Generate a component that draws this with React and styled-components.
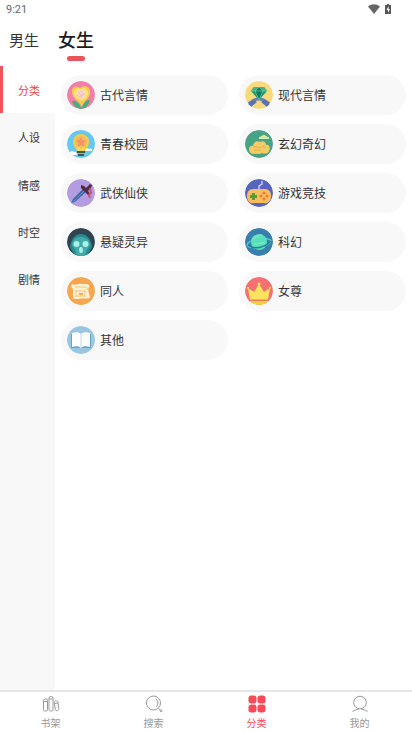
import React, { useState } from "react";
import styled, { createGlobalStyle } from "styled-components";

const GlobalStyle = createGlobalStyle`
  * { box-sizing: border-box; }
  body {
    margin: 0;
    background: #fff;
    color: #333;
    font-family: Roboto, "Noto Sans CJK SC", sans-serif;
  }
`;

const PlainButton = styled.button`
  padding: 0;
  border: 0;
  background: none;
  color: inherit;
  font-family: inherit;
  cursor: pointer;
`;

const Page = styled.div`
  display: flex;
  flex-direction: column;
  min-height: 100vh;
`;

const StatusBar = styled.div`
  display: flex;
  align-items: center;
  justify-content: space-between;
  height: 18px;
  padding: 0 20px 0 6px;
  font-size: 11px;
  color: #666;
`;

const StatusIcons = styled.div`
  display: flex;
  align-items: center;
  gap: 4px;
`;

const Header = styled.header`
  display: flex;
  align-items: center;
  gap: 19px;
  height: 48px;
  padding: 0 9px 2px;
`;

const GenderTab = styled(PlainButton)`
  position: relative;
  color: ${(p) => (p.$active ? "#1c1c1c" : "#333")};
  font-size: ${(p) => (p.$active ? 18 : 15)}px;
  font-weight: ${(p) => (p.$active ? 500 : 400)};
  line-height: 24px;

  &::after {
    content: "";
    display: ${(p) => (p.$active ? "block" : "none")};
    position: absolute;
    left: 50%;
    bottom: -8px;
    width: 18px;
    height: 5px;
    margin-left: -9px;
    border-radius: 3px;
    background: #e95558;
  }
`;

const Body = styled.div`
  display: flex;
  flex: 1;
`;

const Sidebar = styled.aside`
  width: 55px;
  background: #f8f8f8;
`;

const SideList = styled.nav`
  display: flex;
  flex-direction: column;
  height: 237px;
`;

const SideItem = styled(PlainButton)`
  flex: 1;
  border-left: 3px solid ${(p) => (p.$active ? "#f25558" : "transparent")};
  background: ${(p) => (p.$active ? "#fff" : "transparent")};
  color: ${(p) => (p.$active ? "#f04348" : "#333")};
  font-size: 11px;
`;

const Grid = styled.main`
  flex: 1;
  display: grid;
  grid-template-columns: 1fr 1fr;
  grid-auto-rows: 40px;
  gap: 9px 11px;
  padding: 9px 6px;
`;

const Category = styled(PlainButton)`
  display: flex;
  align-items: center;
  gap: 5px;
  padding: 0 6px;
  border-radius: 20px;
  background: #f8f8f8;
  font-size: 12px;
  line-height: 18px;

  svg { flex: none; border-radius: 50%; }
`;

const CategoryName = styled.span`
  padding-top: 2px;
`;

const BottomNav = styled.nav`
  display: flex;
  height: 44px;
  border-top: 2px solid #e6e6e6;
  background: #fff;
`;

const NavItem = styled(PlainButton)`
  flex: 1;
  display: flex;
  flex-direction: column;
  align-items: center;
  gap: 3px;
  padding: 3px 2px 0 0;
  color: ${(p) => (p.$active ? "#f94b55" : "#999")};
  font-size: 10px;
  line-height: 16px;
`;

function Art({ bg, children }) {
  return (
    <svg width="28" height="28" viewBox="0 0 28 28" aria-hidden="true">
      <circle cx="14" cy="14" r="14" fill={bg} />
      {children}
    </svg>
  );
}

const Rose = () => (
  <Art bg="#f07fa9">
    <path d="M14 27C12 22 9 19 5 20c1 4 4 7 9 8 5-1 8-4 9-9-4 0-7 3-9 8Z" fill="#43b17b" />
    <path d="M5 12C4 6 9 4 13 7c4-4 11-1 10 5 0 6-6 7-8 14C12 20 6 18 5 12Z" fill="#f9cb4f" />
    <path d="M7 12c0-4 4-6 7-4 4-2 8 1 7 5s-3 5-6 7c-4-1-8-3-8-8Z" fill="#ffe272" />
    <circle cx="14" cy="13" r="4.500" fill="#fbdcd2" />
    <path d="M11 12c2-3 6-1 5 1s-4 1-3-1M10 14c2 3 6 2 7-1" fill="none" stroke="#f3a4ad" strokeWidth=".8" />
  </Art>
);

const Bulb = () => (
  <Art bg="#65c8ef">
    <path d="M6 12a8 8 0 0 1 16 0c0 5-4 6-4 10h-8c0-4-4-5-4-10Z" fill="#f8cd45" />
    <circle cx="14" cy="12" r="6" fill="#f9b95a" />
    <path d="m14 7 1.500 3 3.500.5-2.500 2.500.5 3.500-3-1.500-3 1.500.5-3.500L9 10.500l3.500-.5Z" fill="#f39468" />
    <path d="M12 17v5M16 17v5" stroke="#f9e889" />
    <path d="M10 21h8v2h-8ZM11 24h6v2h-6Z" fill="#40583b" />
    <path d="M3 23c0-2 3-3 4-1 2-1 3 1 3 3H5ZM18 20c1-2 3-2 4-1 2-1 4 0 3 2h-6Z" fill="#fff" />
  </Art>
);

const Sword = () => (
  <Art bg="#b49ce1">
    <path d="m4 25 2-5L17 9l3 3L9 22Z" fill="#3e68a5" />
    <path d="M5 24 18 11" stroke="#6190c2" />
    <path d="m14 6 3 1 2 2 4-4 2 1-1 3-3 3 2 3-2 1-7-7Z" fill="#512c43" />
    <path d="m23 9 1 5-2 2 1 3" fill="none" stroke="#c65082" strokeWidth="2" />
  </Art>
);

const Skull = () => (
  <Art bg="#304552">
    <path d="M3 19C4 10 9 6 14 6s10 4 11 13l-5 9H8Z" fill="#278c91" />
    <path d="M5 17c0-5 4-8 9-8s9 3 9 8l-3 5-2 6h-8l-2-6Z" fill="#43aaa7" />
    <circle cx="9.500" cy="16" r="3" fill="#a7f1e6" />
    <circle cx="18.500" cy="16" r="3" fill="#a7f1e6" />
    <ellipse cx="14" cy="22" rx="2" ry="3" fill="#a7f1e6" />
  </Art>
);

const Scroll = () => (
  <Art bg="#f4a650">
    <path d="M5 7c3 2 6-1 9 0h6c3 0 3 4 1 5l2 9c-4 1-8 0-12 1-3 0-5 0-5-2V12C4 11 4 9 5 7Z" fill="#fff1cf" />
    <path d="M8 10h10c2 0 3 1 2 3M9 13v7M18 13v7M9 14h9M9 19h9" fill="none" stroke="#f3bd78" strokeWidth=".8" />
    <path d="M12 16h4v2h-4Z" fill="#f3ad5a" />
  </Art>
);

const Book = () => (
  <Art bg="#9ac6df">
    <path d="M4 8h20v14H4Z" fill="#67a4c3" />
    <path d="M5 7c4-1 7-1 9 1v14c-2-2-5-2-9-1Z" fill="#fff" />
    <path d="M14 8c2-2 5-2 9-1v14c-4-1-7-1-9 1Z" fill="#f8fbfb" />
    <path d="M14 8v13" stroke="#c3d7df" />
  </Art>
);

const Ring = () => (
  <Art bg="#fbda7b">
    <path d="M4 25c2-5 6-7 10-7s8 2 10 7" fill="none" stroke="#6381b7" strokeWidth="3" />
    <path d="m3 21 6-2 3 2-6 5ZM25 21l-6-2-3 2 6 5Z" fill="#5675ad" />
    <path d="M9 6h10l3 4-8 9-8-9Z" fill="#159571" />
    <path d="M9 6h4l-3 4H6ZM15 6h4l3 4h-4Z" fill="#45b487" />
    <path d="m10 10 4-4 4 4-4 9Z" fill="#087c60" />
    <path d="M6 10h16M10 10l4 9 4-9-4-4Z" fill="none" stroke="#7bd3a0" strokeWidth=".7" />
  </Art>
);

const Dragon = () => (
  <Art bg="#48a285">
    <path d="M14 7c2 0 3-2 5-2s2 2 5 2v2H14Z" fill="#d8e8a4" />
    <path d="M4 19c0-3 3-4 4-3 0-4 4-6 7-4 3-2 6 0 6 3 3-1 5 3 3 6-1 3-5 3-7 2-3 2-5 0-8 1-3 0-5-2-5-5Z" fill="#f4cc65" />
    <path d="M8 17c3-2 5 2 8 0s4 0 3 2M9 21c3-2 5 0 7-1" fill="none" stroke="#dea955" strokeWidth=".8" />
  </Art>
);

const Gamepad = () => (
  <Art bg="#5965bd">
    <path d="M14 11V7l3-2V2" fill="none" stroke="#c4cef1" strokeWidth="1.500" />
    <path d="M8 10h12c4 0 6 3 6 7 0 5-3 8-7 7H9c-4 1-7-2-7-7 0-4 2-7 6-7Z" fill="#f8bd5e" />
    <path d="M7 14h3v2h2v3h-2v2H7v-2H5v-3h2Z" fill="#579b3c" />
    <g fill="#ec793a">
      <circle cx="19" cy="14" r="1.500" />
      <circle cx="19" cy="20" r="1.500" />
      <circle cx="16" cy="17" r="1.500" />
      <circle cx="22" cy="17" r="1.500" />
    </g>
  </Art>
);

const Planet = () => (
  <Art bg="#397fae">
    <ellipse cx="14" cy="15" rx="12" ry="4" fill="none" stroke="#50c7bf" strokeWidth="1.500" transform="rotate(-10 14 15)" />
    <circle cx="14" cy="14" r="8" fill="#58dfbb" />
    <path d="M7 11c5-1 5-4 10-4M9 16c4 1 6-2 11-1" fill="none" stroke="#91efc8" strokeWidth=".8" />
    <path d="M3 17c6 5 16 3 23-4" fill="none" stroke="#267f95" strokeWidth="1.500" />
  </Art>
);

const Crown = () => (
  <Art bg="#f77071">
    <path d="M4 24h20c-2 3-6 4-10 4s-8-1-10-4Z" fill="#f9d13f" />
    <path d="m3 11 6 4 5-8 5 8 6-4-2 12H5Z" fill="#ffe35f" />
    <g fill="#ffe35f">
      <circle cx="3" cy="11" r="1" />
      <circle cx="14" cy="7" r="1.500" />
      <circle cx="25" cy="11" r="1" />
    </g>
    <path d="M5 23h18" stroke="#d88b42" />
  </Art>
);

const NavIcon = ({ children }) => (
  <svg width="18" height="18" viewBox="0 0 18 18" fill="none" stroke="currentColor" aria-hidden="true">
    {children}
  </svg>
);

const ShelfIcon = () => (
  <NavIcon>
    <rect x="1.500" y="4" width="4" height="12" rx="1.500" />
    <rect x="7" y="1.500" width="4" height="14.500" rx="1.500" />
    <path d="M12.300 8c-.3-2.500 3-3 3.700-1l.8 6.500c.3 2.500-3 3-3.500 1ZM2 6.500h3M7.500 4h3M13 8.500l3-.5" />
  </NavIcon>
);

const SearchIcon = () => (
  <NavIcon>
    <circle cx="8.500" cy="8" r="7" />
    <path d="M11 4c2.500 2 2.500 6 0 8M13.500 13.500 15 15" />
    <circle cx="16" cy="15.700" r="1" />
  </NavIcon>
);

const GridIcon = () => (
  <NavIcon>
    <g fill="currentColor" stroke="none">
      <rect x="0.500" y="0.500" width="8" height="8" rx="2.700" />
      <rect x="9.500" y="0.500" width="8" height="8" rx="2.700" />
      <rect x="0.500" y="9.500" width="8" height="8" rx="2.700" />
      <rect x="9.500" y="9.500" width="8" height="8" rx="2.700" />
    </g>
  </NavIcon>
);

const UserIcon = () => (
  <NavIcon>
    <circle cx="9" cy="7.500" r="6.300" />
    <path d="M1.500 16.500c2-1.500 4-2 6-2M10.500 14.500c2 0 4 .5 6 2" />
  </NavIcon>
);

const sections = ["分类", "人设", "情感", "时空", "剧情"];

const categories = [
  ["古代言情", Rose], ["现代言情", Ring],
  ["青春校园", Bulb], ["玄幻奇幻", Dragon],
  ["武侠仙侠", Sword], ["游戏竞技", Gamepad],
  ["悬疑灵异", Skull], ["科幻", Planet],
  ["同人", Scroll], ["女尊", Crown],
  ["其他", Book],
];

const tabs = [["书架", ShelfIcon], ["搜索", SearchIcon], ["分类", GridIcon], ["我的", UserIcon]];

export default function App() {
  const [gender, setGender] = useState("女生");
  const [section, setSection] = useState("分类");
  const [tab, setTab] = useState("分类");

  return (
    <Page>
      <GlobalStyle />
      <StatusBar>
        <span>9:21</span>
        <StatusIcons>
          <svg width="12" height="10" viewBox="0 0 12 10" aria-hidden="true">
            <path d="M0 2.500C4-.5 8-.5 12 2.500L6 10Z" fill="#666" />
          </svg>
          <svg width="8" height="10" viewBox="0 0 8 10" aria-hidden="true">
            <path d="M3 0h2v1h2v9H1V1h2Z" fill="#555" />
            <path d="M4.500 2 2.500 6H4v3l2-4H4.500Z" fill="#fff" />
          </svg>
        </StatusIcons>
      </StatusBar>
      <Header>
        {["男生", "女生"].map((name) => (
          <GenderTab key={name} $active={gender === name} onClick={() => setGender(name)}>{name}</GenderTab>
        ))}
      </Header>
      <Body>
        <Sidebar>
          <SideList>
            {sections.map((name) => (
              <SideItem key={name} $active={section === name} onClick={() => setSection(name)}>{name}</SideItem>
            ))}
          </SideList>
        </Sidebar>
        <Grid>
          {categories.map(([name, Icon]) => (
            <Category key={name}>
              <Icon />
              <CategoryName>{name}</CategoryName>
            </Category>
          ))}
        </Grid>
      </Body>
      <BottomNav>
        {tabs.map(([name, Icon]) => (
          <NavItem key={name} $active={tab === name} onClick={() => setTab(name)}>
            <Icon />
            {name}
          </NavItem>
        ))}
      </BottomNav>
    </Page>
  );
}
